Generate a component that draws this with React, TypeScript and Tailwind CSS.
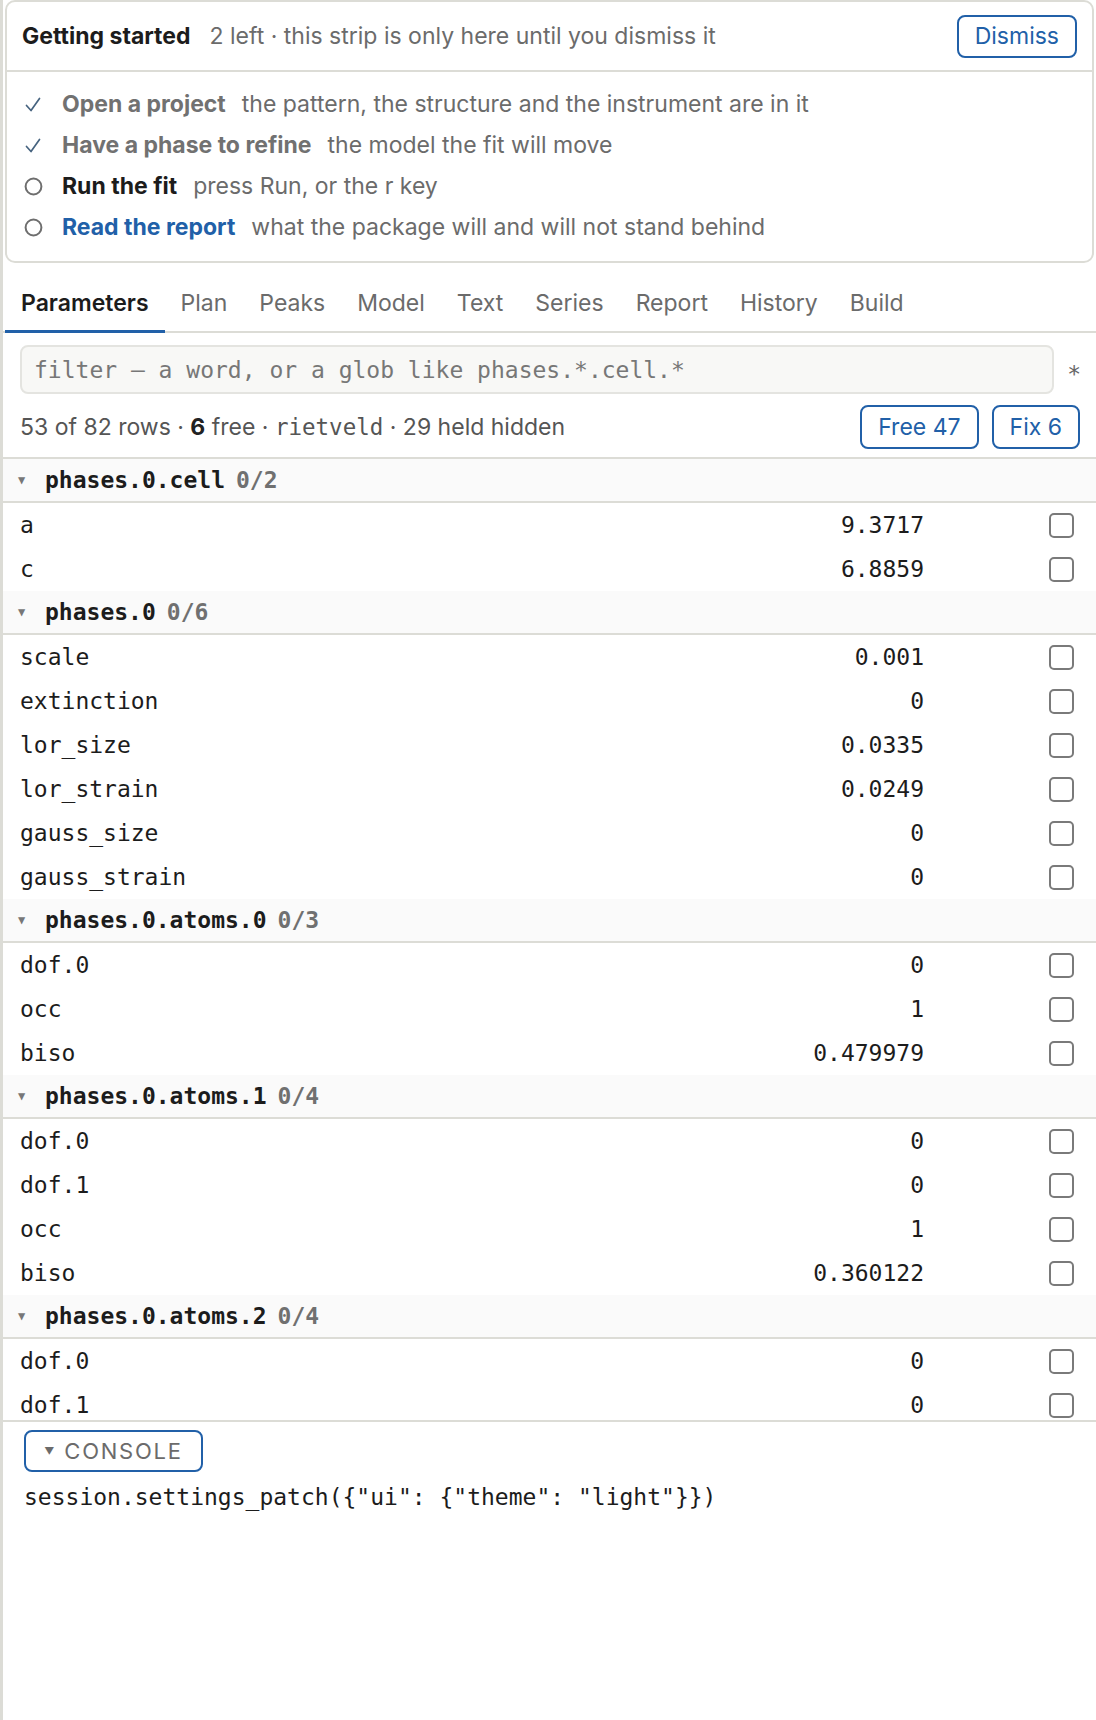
import { useState } from "react";

type Row = { name: string; value: string };
type Group = { path: string; held: string; rows: Row[] };

// only the rows that fit in the scroll pane are listed for the last group
const groups: Group[] = [
  {
    path: "phases.0.cell",
    held: "0/2",
    rows: [
      { name: "a", value: "9.3717" },
      { name: "c", value: "6.8859" },
    ],
  },
  {
    path: "phases.0",
    held: "0/6",
    rows: [
      { name: "scale", value: "0.001" },
      { name: "extinction", value: "0" },
      { name: "lor_size", value: "0.0335" },
      { name: "lor_strain", value: "0.0249" },
      { name: "gauss_size", value: "0" },
      { name: "gauss_strain", value: "0" },
    ],
  },
  {
    path: "phases.0.atoms.0",
    held: "0/3",
    rows: [
      { name: "dof.0", value: "0" },
      { name: "occ", value: "1" },
      { name: "biso", value: "0.479979" },
    ],
  },
  {
    path: "phases.0.atoms.1",
    held: "0/4",
    rows: [
      { name: "dof.0", value: "0" },
      { name: "dof.1", value: "0" },
      { name: "occ", value: "1" },
      { name: "biso", value: "0.360122" },
    ],
  },
  {
    path: "phases.0.atoms.2",
    held: "0/4",
    rows: [
      { name: "dof.0", value: "0" },
      { name: "dof.1", value: "0" },
    ],
  },
];

const steps = [
  { title: "Open a project", note: "the pattern, the structure and the instrument are in it", state: "done" },
  { title: "Have a phase to refine", note: "the model the fit will move", state: "done" },
  { title: "Run the fit", note: "press Run, or the r key", state: "todo" },
  { title: "Read the report", note: "what the package will and will not stand behind", state: "link" },
];

const tabs = ["Parameters", "Plan", "Peaks", "Model", "Text", "Series", "Report", "History", "Build"];

const mono = "font-['DejaVu_Sans_Mono',monospace]";

const StepIcon = ({ done }: { done: boolean }) =>
  done ? (
    <svg width="18" height="18" viewBox="0 0 18 18" fill="none">
      <path d="M2.5 9.5l4.5 5 8.5-12" stroke="#46637f" strokeWidth="1.7" strokeLinecap="round" strokeLinejoin="round" />
    </svg>
  ) : (
    <svg width="19" height="19" viewBox="0 0 19 19" fill="none">
      <circle cx="9.5" cy="9.5" r="7.9" stroke="#6e6e6e" strokeWidth="2" />
    </svg>
  );

const Check = ({ on, onClick }: { on: boolean; onClick: () => void }) => (
  <button
    onClick={onClick}
    className={`w-[25px] h-[25px] rounded-[5px] border-2 ${on ? "border-[#2160a8] bg-[#2160a8]" : "border-[#7a7a7a] bg-white"}`}
  />
);

export default function App() {
  const [tab, setTab] = useState("Parameters");
  const [free, setFree] = useState<Record<string, boolean>>({});
  const [consoleOpen, setConsoleOpen] = useState(true);

  return (
    <div className="min-h-screen bg-white border-l-[3px] border-[#dcdcd6] font-['Inter',sans-serif] text-[#1c1c1c] leading-normal">
      {/* getting started strip */}
      <div className="mx-[2px] border-2 border-[#dcdcd6] rounded-[10px]">
        <div className="h-[70px] flex items-center pl-[15px] pr-[15px] border-b-2 border-[#dcdcd6]">
          <span className="text-[23px] font-bold">Getting started</span>
          <span className="ml-[19px] text-[23px] text-[#6b6b6b]">2 left · this strip is only here until you dismiss it</span>
          <button className="ml-auto h-[43px] px-[16px] rounded-lg border-2 border-[#2160a8] text-[23px] text-[#2160a8]">
            Dismiss
          </button>
        </div>
        <div className="pt-[12px] pb-[13px] px-[16px]">
          {steps.map((s) => (
            <div key={s.title} className="h-[41px] flex items-center text-[23px]">
              <div className="w-[20px] flex justify-center">
                <StepIcon done={s.state === "done"} />
              </div>
              <span
                className={`ml-[19px] font-bold ${
                  s.state === "done" ? "text-[#717171]" : s.state === "link" ? "text-[#2160a8]" : "text-[#1c1c1c]"
                }`}
              >
                {s.title}
              </span>
              <span className="ml-[16px] text-[#6b6b6b]">{s.note}</span>
            </div>
          ))}
        </div>
      </div>

      {/* tab bar */}
      <div className="mt-[14px] flex pl-[2px] border-b-2 border-[#dcdcd6]">
        {tabs.map((t) => (
          <button
            key={t}
            onClick={() => setTab(t)}
            className={`h-[56px] px-[16px] -mb-[2px] border-b-[3px] text-[23px] ${
              t === tab ? "border-[#2160a8] font-semibold text-[#1c1c1c]" : "border-transparent text-[#6b6b6b]"
            }`}
          >
            {t}
          </button>
        ))}
      </div>

      {/* filter + summary */}
      <div className="pt-[12px] pl-[17px] pr-[15px]">
        <div className="flex items-center gap-[13px]">
          <input
            placeholder="filter — a word, or a glob like phases.*.cell.*"
            className={`flex-1 h-[49px] rounded-lg border-2 border-[#e4e4e0] bg-[#f8f8f6] px-[12px] text-[23px] ${mono} placeholder:text-[#777] outline-none`}
          />
          <span className={`${mono} text-[23px] text-[#666] pt-[10px]`}>*</span>
        </div>
        <div className="mt-[11px] mb-[8px] flex items-center text-[23px] text-[#555]">
          <span>
            53 of 82 rows · <b className="text-[#222]">6</b> free · <span className={`${mono} text-[22.5px]`}>rietveld</span> · 29 held hidden
          </span>
          <div className="ml-auto flex gap-[13px] pr-px">
            <button className="h-[44px] px-[16px] rounded-lg border-2 border-[#2160a8] text-[#2160a8]">Free 47</button>
            <button className="h-[44px] px-[16px] rounded-lg border-2 border-[#2160a8] text-[#2160a8]">Fix 6</button>
          </div>
        </div>
      </div>

      {/* parameter table */}
      <div className={`h-[965px] overflow-hidden border-y-2 border-[#dcdcd6] ${mono} text-[23px]`}>
        {groups.map((g) => (
          <div key={g.path}>
            <div className="h-[44px] flex items-center bg-[#fafafa] border-b-2 border-[#dcdcd6] pl-[15px]">
              <span className="text-[12px] text-[#777] w-[27px]">▼</span>
              <span className="font-bold">{g.path}</span>
              <span className="ml-[11px] font-bold text-[#707070]">{g.held}</span>
            </div>
            {g.rows.map((r) => {
              const key = `${g.path}.${r.name}`;
              return (
                <div key={key} className="h-[44px] flex items-center pl-[17px]">
                  <span className="flex-1">{r.name}</span>
                  <span className="w-[200px] text-right">{r.value}</span>
                  <div className="w-[172px] flex justify-end pr-[22px]">
                    <Check on={!!free[key]} onClick={() => setFree({ ...free, [key]: !free[key] })} />
                  </div>
                </div>
              );
            })}
          </div>
        ))}
      </div>

      {/* console */}
      <div className="pt-[8px] pl-[21px]">
        <button
          onClick={() => setConsoleOpen(!consoleOpen)}
          className="h-[42px] w-[179px] flex items-center justify-center gap-[10px] rounded-lg border-2 border-[#2160a8] text-[#6b6b6b]"
        >
          <span className="text-[10px]">{consoleOpen ? "▼" : "▶"}</span>
          <span className="text-[22px] tracking-[0.08em]">CONSOLE</span>
        </button>
        {consoleOpen && (
          <div className={`mt-[8px] ${mono} text-[23px] text-[#1c1c1c]`}>
            session.settings_patch({'{'}"ui": {'{'}"theme": "light"{'}}'})
          </div>
        )}
      </div>
    </div>
  );
}
